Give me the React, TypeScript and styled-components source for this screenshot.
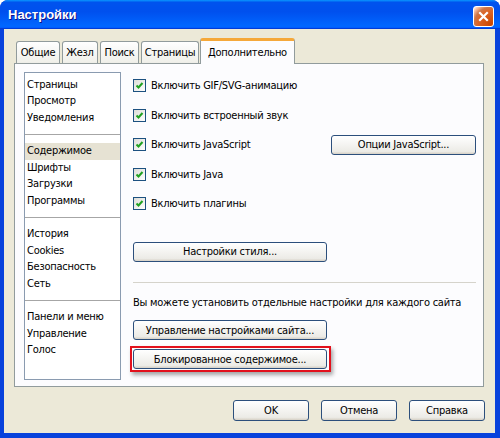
import * as React from "react";
import styled, { createGlobalStyle } from "styled-components";

const GlobalStyle = createGlobalStyle`
  html, body {
    margin: 0;
    padding: 0;
    background: #fff;
  }
  body {
    font-family: "DejaVu Sans Condensed", "Liberation Sans", sans-serif;
    font-size: 11px;
    letter-spacing: -0.25px;
    color: #000;
  }
  * {
    box-sizing: border-box;
  }
`;

const Window = styled.div`
  width: 500px;
  height: 438px;
  display: flex;
  flex-direction: column;
  border-radius: 8px 8px 0 0;
  overflow: hidden;
  background: #0831d9;
`;

const TitleBar = styled.div`
  height: 29px;
  flex: none;
  display: flex;
  align-items: center;
  justify-content: space-between;
  padding: 0 6px 0 8px;
  background: linear-gradient(
    180deg,
    #0997ff,
    #0053ee 8%,
    #0050ee 40%,
    #06f 88%,
    #06f 93%,
    #005bff 95%,
    #003dd7 96%,
    #003dd7
  );
`;

const Title = styled.div`
  font-family: "Liberation Sans", sans-serif;
  font-weight: bold;
  font-size: 13px;
  letter-spacing: 0;
  color: #fff;
  text-shadow: 1px 1px #0f1089;
`;

const CloseButton = styled.div`
  width: 21px;
  height: 21px;
  margin-top: 4px;
  border: 1px solid #fff;
  border-radius: 3px;
  display: flex;
  align-items: center;
  justify-content: center;
  background: radial-gradient(
    circle at 90% 90%,
    #cc4600 0,
    #dc6527 55%,
    #cd7546 70%,
    #ffccb2 90%,
    #fff 100%
  );
`;

const Body = styled.div`
  flex: 1;
  display: flex;
  flex-direction: column;
  background: #ece9d8;
  border-style: solid;
  border-color: #0842dc;
  border-width: 0 5px 5px 4px;
  padding: 9px 11px 0 10px;
`;

const TabStrip = styled.div`
  height: 25px;
  display: flex;
  align-items: flex-end;
  gap: 2px;
  padding-left: 2px;
  position: relative;
  z-index: 1;
`;

const Tab = styled.div<{ $w: number; $active?: boolean }>`
  width: ${(p) => p.$w}px;
  height: ${(p) => (p.$active ? 26 : 22)}px;
  margin-bottom: ${(p) => (p.$active ? -1 : 0)}px;
  margin-left: ${(p) => (p.$active ? -1 : 0)}px;
  display: flex;
  align-items: center;
  justify-content: center;
  border: 1px solid #919b9c;
  border-bottom: none;
  border-top: ${(p) => (p.$active ? "3px solid #f5a83a" : "1px solid #919b9c")};
  border-radius: 3px 3px 0 0;
  background: ${(p) =>
    p.$active
      ? "#fcfcfe"
      : "linear-gradient(180deg, #fff, #fafaf9 26%, #f0f0ea 95%, #ecebe6)"};
  white-space: nowrap;
`;

const Panel = styled.div`
  height: 324px;
  display: flex;
  border: 1px solid #919b9c;
  background: #fcfcfe;
  padding: 8px 7px 0 9px;
`;

const SectionList = styled.div`
  width: 97px;
  height: 308px;
  flex: none;
  background: #fff;
  border: 1px solid #8a9bb0;
  padding-top: 3.5px;
`;

const ListItem = styled.div<{ $selected?: boolean }>`
  height: 16.7px;
  line-height: 16.7px;
  padding-left: 2px;
  white-space: nowrap;
  background: ${(p) => (p.$selected ? "#e6e2d3" : "transparent")};
`;

const ListDivider = styled.div`
  height: 16.3px;
  display: flex;
  align-items: center;

  &::after {
    content: "";
    flex: 1;
    height: 1px;
    background: #a6a6a6;
  }
`;

const Options = styled.div`
  flex: 1;
  margin-left: 12px;
  margin-top: -1px;
  display: flex;
  flex-direction: column;
  align-items: flex-start;
`;

const OptionRow = styled.div`
  width: 100%;
  height: 29.5px;
  display: flex;
  align-items: center;
  gap: 5px;
  white-space: nowrap;
`;

const CheckBox = styled.span`
  width: 13px;
  height: 13px;
  flex: none;
  border: 1px solid #1c5180;
  background: linear-gradient(135deg, #dcdcd7, #fff);
  display: flex;
  align-items: center;
  justify-content: center;
`;

const Button = styled.button<{ $w: number; $h?: number }>`
  width: ${(p) => p.$w}px;
  height: ${(p) => p.$h ?? 20}px;
  flex: none;
  padding: 0;
  font: inherit;
  letter-spacing: inherit;
  color: #000;
  border: 1px solid #2c4f7c;
  border-radius: 3px;
  background: linear-gradient(180deg, #fff, #ecebe6 86%, #d6d0c5);
  white-space: nowrap;
`;

const PushRight = styled.div`
  margin-left: auto;
`;

const StyleButtonRow = styled.div`
  margin-top: 23px;
`;

const Separator = styled.div`
  width: 100%;
  height: 1px;
  margin-top: 20px;
  background: #d5d3cb;
`;

const Note = styled.div`
  margin-top: 13px;
  line-height: 13px;
  white-space: nowrap;
`;

const SiteButtonRow = styled.div`
  margin-top: 11.5px;
`;

const Highlight = styled.div`
  margin-top: 6px;
  margin-left: -3px;
  padding: 1px 2px 1px 1px;
  border: 2px solid #e2101c;
  box-shadow: 2px 3px 4px rgba(0, 0, 0, 0.35);
`;

const Footer = styled.div`
  display: flex;
  justify-content: flex-end;
  gap: 12px;
  margin-top: 13px;
  margin-right: -1px;
`;

const Check = () => (
  <svg width="9" height="9" viewBox="0 0 9 9">
    <polyline
      points="1.5,4.5 3.5,6.5 7.5,2"
      fill="none"
      stroke="#21a121"
      strokeWidth="2"
    />
  </svg>
);

const Cross = () => (
  <svg width="13" height="13" viewBox="0 0 13 13">
    <path d="M3 3 L10 10 M10 3 L3 10" stroke="#fff" strokeWidth="2.2" strokeLinecap="square" />
  </svg>
);

const tabs = [
  { label: "Общие", w: 44 },
  { label: "Жезл", w: 36 },
  { label: "Поиск", w: 39 },
  { label: "Страницы", w: 58 },
  { label: "Дополнительно", w: 95, active: true },
];

const sections = [
  ["Страницы", "Просмотр", "Уведомления"],
  ["Содержимое", "Шрифты", "Загрузки", "Программы"],
  ["История", "Cookies", "Безопасность", "Сеть"],
  ["Панели и меню", "Управление", "Голос"],
];

const options = [
  "Включить GIF/SVG-анимацию",
  "Включить встроенный звук",
  "Включить JavaScript",
  "Включить Java",
  "Включить плагины",
];

const App = () => {
  return (
    <>
      <GlobalStyle />
      <Window>
        <TitleBar>
          <Title>Настройки</Title>
          <CloseButton>
            <Cross />
          </CloseButton>
        </TitleBar>

        <Body>
          <TabStrip>
            {tabs.map((t) => (
              <Tab key={t.label} $w={t.w} $active={t.active}>
                {t.label}
              </Tab>
            ))}
          </TabStrip>

          <Panel>
            <SectionList>
              {sections.map((group, i) => (
                <React.Fragment key={i}>
                  {i > 0 && <ListDivider />}
                  {group.map((item) => (
                    <ListItem key={item} $selected={item === "Содержимое"}>
                      {item}
                    </ListItem>
                  ))}
                </React.Fragment>
              ))}
            </SectionList>

            <Options>
              {options.map((label) => (
                <OptionRow key={label}>
                  <CheckBox>
                    <Check />
                  </CheckBox>
                  {label}
                  {label === "Включить JavaScript" && (
                    <PushRight>
                      <Button $w={145}>Опции JavaScript...</Button>
                    </PushRight>
                  )}
                </OptionRow>
              ))}

              <StyleButtonRow>
                <Button $w={194}>Настройки стиля...</Button>
              </StyleButtonRow>

              <Separator />

              <Note>Вы можете установить отдельные настройки для каждого сайта</Note>

              <SiteButtonRow>
                <Button $w={194}>Управление настройками сайта...</Button>
              </SiteButtonRow>

              <Highlight>
                <Button $w={194}>Блокированное содержимое...</Button>
              </Highlight>
            </Options>
          </Panel>

          <Footer>
            <Button $w={76} $h={21}>OK</Button>
            <Button $w={76} $h={21}>Отмена</Button>
            <Button $w={76} $h={21}>Справка</Button>
          </Footer>
        </Body>
      </Window>
    </>
  );
};

export default App;
